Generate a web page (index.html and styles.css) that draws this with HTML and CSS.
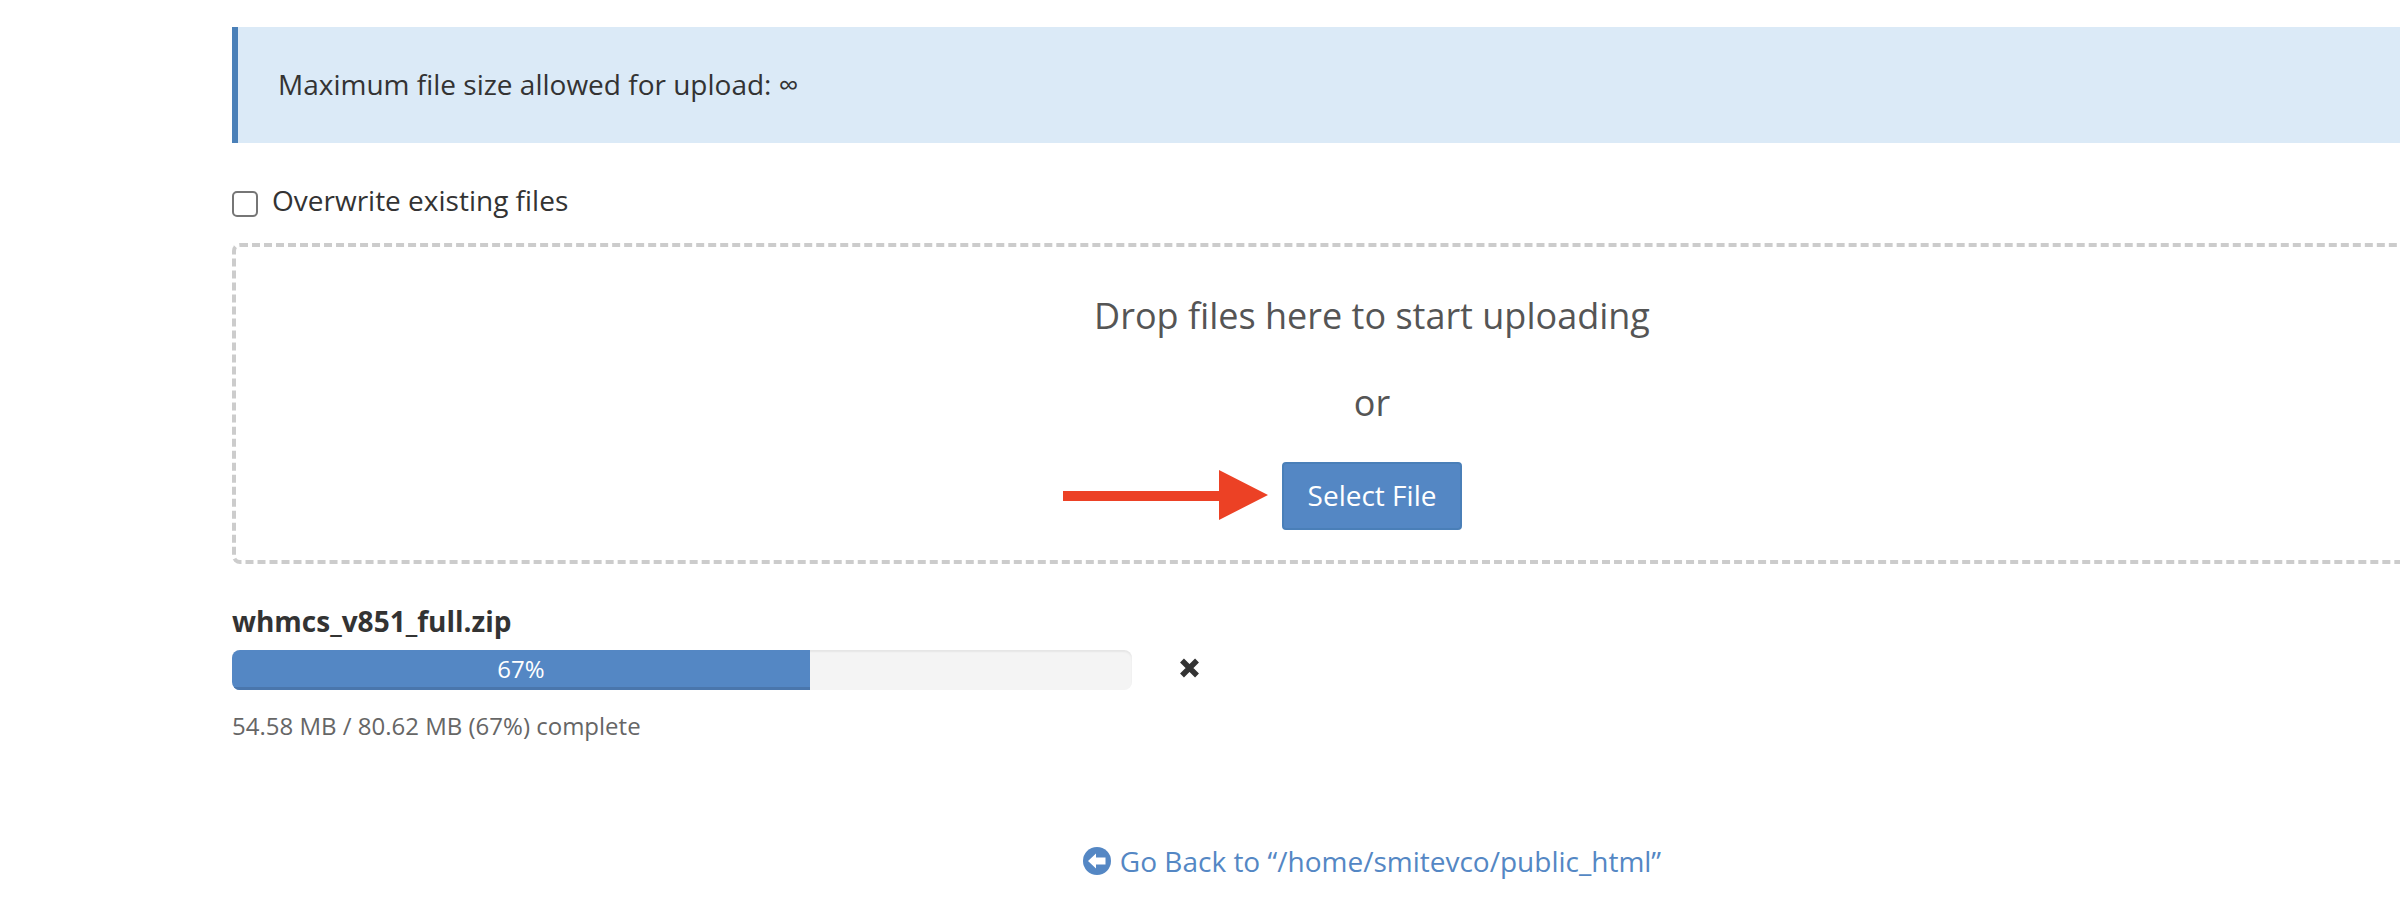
FILE: index.html
```html
<!DOCTYPE html>
<html lang="en">
<head>
  <meta charset="UTF-8" />
  <title>File Upload</title>
  <link rel="stylesheet" href="styles.css">
</head>
<body>
  <div class="page">
    <div class="alert">Maximum file size allowed for upload: ∞</div>

    <label class="overwrite">
      <span class="check"></span>
      Overwrite existing files
    </label>

    <div class="dropzone">
      <p class="drop-title">Drop files here to start uploading</p>
      <p class="drop-or">or</p>
      <div class="select-wrap">
        <svg class="arrow" width="205" height="50" viewBox="0 0 205 50">
          <path fill="#ec4125" d="M0 21H156V0L205 25L156 50V31H0Z" />
        </svg>
        <button class="btn-select" type="button">Select File</button>
      </div>
    </div>

    <div class="upload">
      <div class="file-name">whmcs_v851_full.zip</div>
      <div class="progress-row">
        <div class="progress">
          <div class="progress-bar" style="width: 64.2%">67%</div>
        </div>
        <svg class="cancel" width="21" height="20" viewBox="0 0 21 20">
          <path fill="none" stroke="#333" stroke-width="5.5" d="M3 2.5L18 17.5M18 2.5L3 17.5" />
        </svg>
      </div>
      <div class="file-status">54.58 MB / 80.62 MB (67%) complete</div>
    </div>

    <div class="back">
      <a href="#" class="back-link">
        <svg class="back-icon" width="28" height="28" viewBox="0 0 28 28">
          <circle cx="14" cy="14" r="14" fill="#5487c4" />
          <path fill="#fff" d="M5 14L13 6.5V10.5H22.5V17.5H13V21.5Z" />
        </svg>
        Go Back to “/home/smitevco/public_html”
      </a>
    </div>
  </div>
</body>
</html>
```

FILE: styles.css
```css
html, body {
  margin: 0;
  overflow: hidden;
  background: #fff;
}
body {
  font-family: "Open Sans", sans-serif;
  font-size: 28px;
  line-height: 36px;
  color: #333;
}
.page {
  width: 2280px;
  margin-left: 232px;
  padding-top: 27px;
}
.alert {
  height: 116px;
  box-sizing: border-box;
  padding: 39px 40px;
  border-left: 6px solid #4a80b8;
  background: #dbeaf7;
}
.overwrite {
  display: flex;
  align-items: center;
  gap: 14px;
  height: 36px;
  margin-top: 39px;
}
.check {
  width: 26px;
  height: 26px;
  margin-top: 8px;
  box-sizing: border-box;
  border: 2px solid #767676;
  border-radius: 5px;
  background: #fff;
}
.dropzone {
  box-sizing: border-box;
  height: 321px;
  margin-top: 25px;
  padding-top: 44px;
  border: 4px dashed #ccc;
  border-radius: 8px;
  text-align: center;
  color: #555;
}
.drop-title {
  margin: 0;
  font-size: 36px;
  line-height: 50px;
}
.drop-or {
  margin: 37px 0 0;
  font-size: 36px;
  line-height: 50px;
}
.select-wrap {
  position: relative;
  width: 180px;
  margin: 34px auto 0;
}
.arrow {
  position: absolute;
  left: -219px;
  top: 8px;
}
.btn-select {
  display: block;
  width: 180px;
  height: 68px;
  padding: 0 0 2px;
  border: 2px solid #4a7fb8;
  border-radius: 4px;
  background: #5487c4;
  color: #fff;
  font: 28px "Open Sans", sans-serif;
}
.upload {
  margin-top: 39px;
}
.file-name {
  font-weight: 700;
  font-size: 28px;
  line-height: 36px;
}
.progress-row {
  display: flex;
  align-items: center;
  margin-top: 11px;
}
.progress {
  width: 900px;
  height: 40px;
  border-radius: 8px;
  overflow: hidden;
  background: #f4f4f4;
  box-shadow: inset 0 2px 2px rgba(0,0,0,0.06);
}
.progress-bar {
  height: 40px;
  box-sizing: border-box;
  border-bottom: 3px solid #4a76ac;
  background: #5487c4;
  color: #fff;
  font-size: 24px;
  line-height: 37px;
  text-align: center;
}
.cancel {
  margin-left: 47px;
  margin-top: -5px;
}
.file-status {
  margin-top: 19px;
  font-size: 24px;
  line-height: 34px;
  color: #666;
}
.back {
  margin-top: 100px;
  text-align: center;
}
.back-link {
  display: inline-flex;
  align-items: center;
  gap: 9px;
  color: #5487c4;
  text-decoration: none;
}
```
